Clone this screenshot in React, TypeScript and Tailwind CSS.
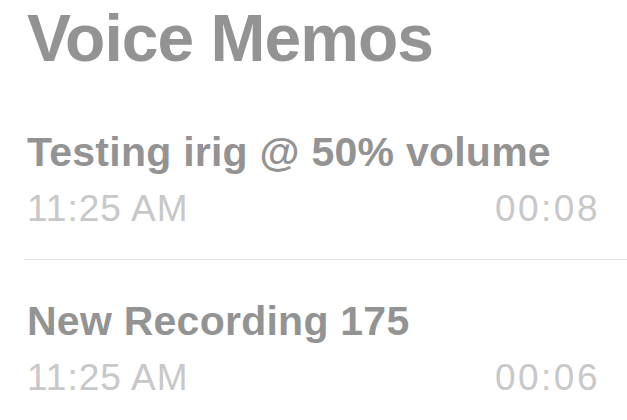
const memos = [
  { title: 'Testing irig @ 50% volume', time: '11:25 AM', length: '00:08' },
  { title: 'New Recording 175', time: '11:25 AM', length: '00:06' },
];

export default function App() {
  return (
    <div
      className="w-[627px] h-[420px] overflow-hidden bg-white pl-[24px]"
      style={{ fontFamily: '"Liberation Sans", Arial, sans-serif' }}
    >
      <h1 className="pt-[2px] pl-[3px] text-[66px] leading-[72px] font-bold tracking-[-1px] text-[#939393]">
        Voice Memos
      </h1>

      <ul className="mt-[54px]">
        {memos.map((memo, idx) => (
          <li
            key={idx}
            className={
              idx === 0
                ? 'pl-[3px] pr-[27px] pb-[30px] border-b border-[#e3e3e3]'
                : 'pl-[3px] pr-[27px] pt-[37px]'
            }
          >
            <div className="text-[41px] leading-[48px] font-bold tracking-[0.25px] text-[#939393]">
              {memo.title}
            </div>
            <div className="mt-[13px] flex justify-between text-[37px] leading-[40px] text-[#c8c8c8]">
              <span className="tracking-[1px]">{memo.time}</span>
              <span className="tracking-[2.5px]">{memo.length}</span>
            </div>
          </li>
        ))}
      </ul>
    </div>
  );
}
